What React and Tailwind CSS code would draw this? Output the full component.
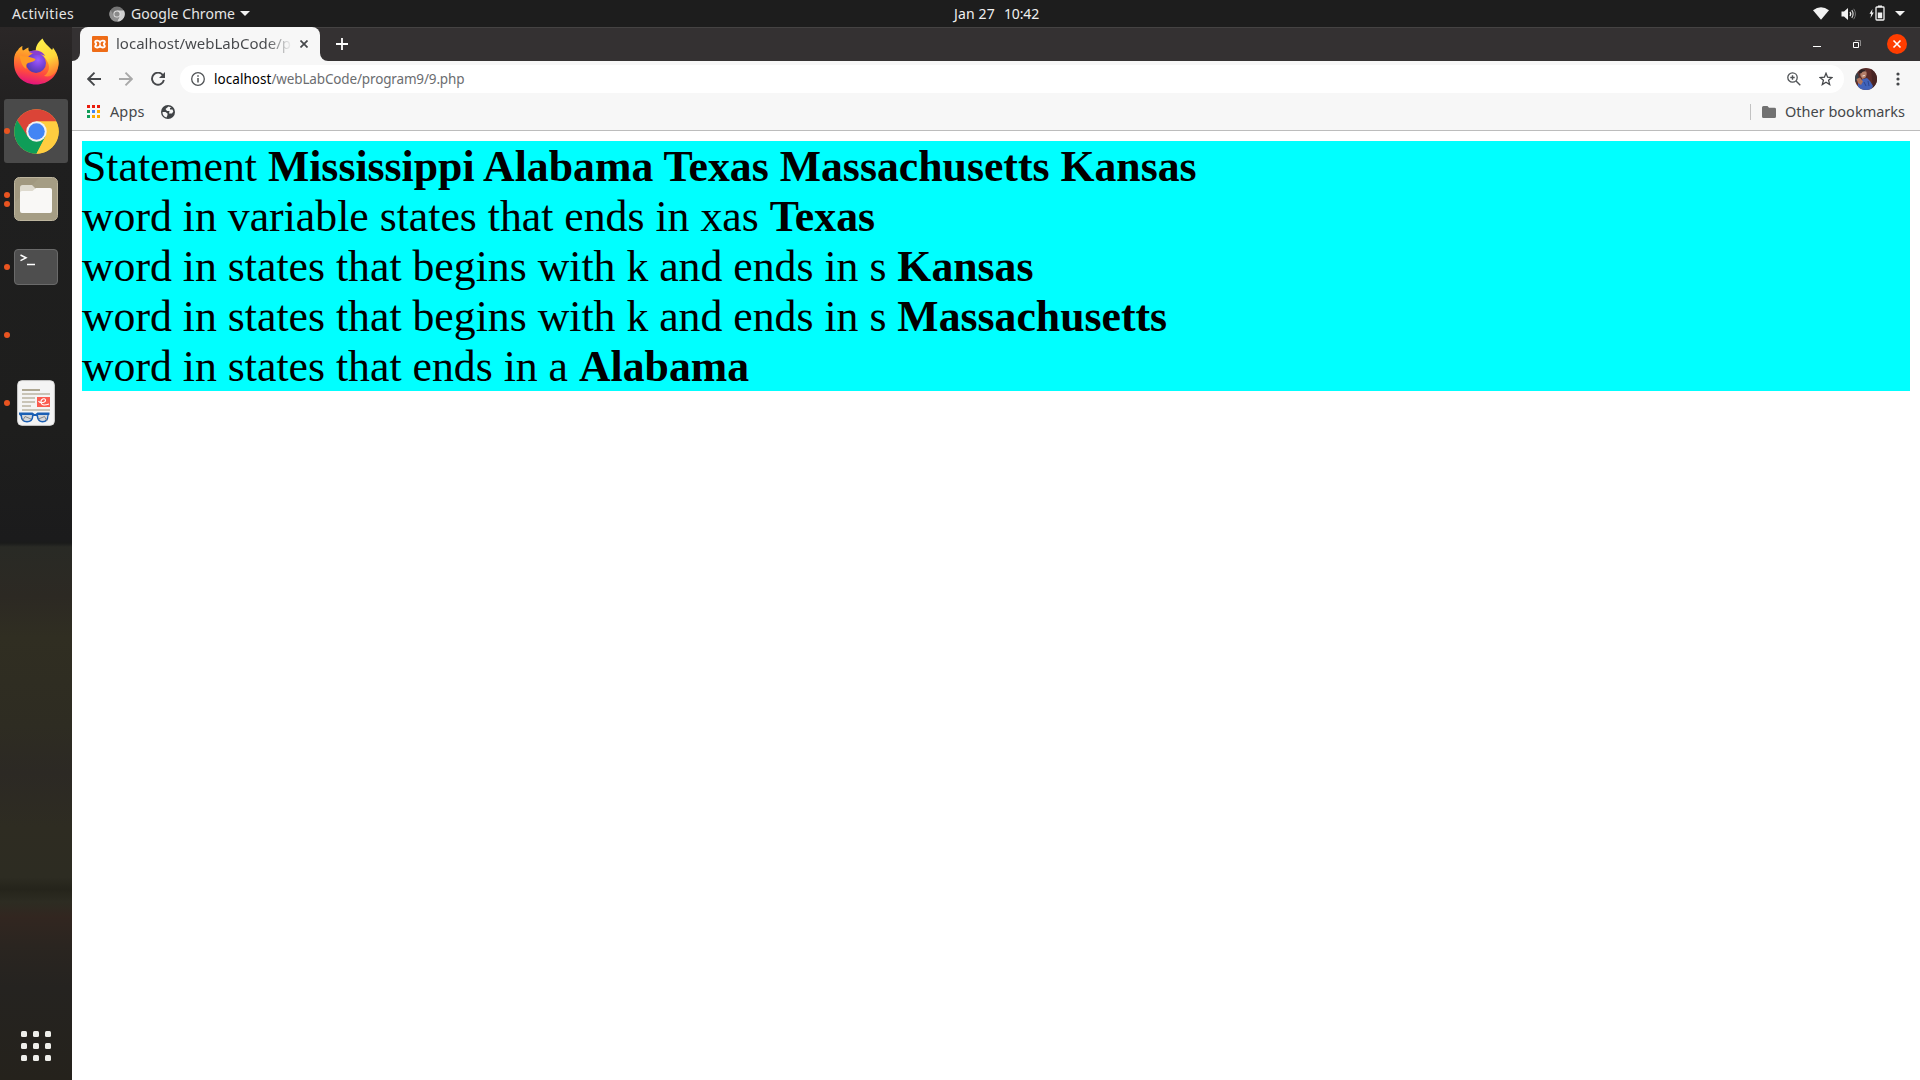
import React from 'react';

const FirefoxIcon = () => (
  <svg viewBox="0 0 46 47" className="-mt-1 h-[47px] w-[46px]">
    <defs>
      <linearGradient id="ffBody" x1="0.6" y1="0.1" x2="0.4" y2="1">
        <stop offset="0" stopColor="#ffb52e" />
        <stop offset="0.3" stopColor="#ff8a2a" />
        <stop offset="0.65" stopColor="#ff4b3e" />
        <stop offset="1" stopColor="#e2127f" />
      </linearGradient>
      <linearGradient id="ffFlame" x1="0.3" y1="0" x2="0.6" y2="1">
        <stop offset="0" stopColor="#fff04a" />
        <stop offset="0.55" stopColor="#ffd83a" />
        <stop offset="1" stopColor="#ff7a2f" />
      </linearGradient>
      <radialGradient id="ffGlobe" cx="0.6" cy="0.35" r="0.7">
        <stop offset="0" stopColor="#9d5cff" />
        <stop offset="0.5" stopColor="#7843d8" />
        <stop offset="1" stopColor="#4c3aa8" />
      </radialGradient>
    </defs>
    <path d="M1 22C1 18 2.500 14 5 12C6 10 8 8.500 9.500 8C9 10 9.200 11.500 10 12.500C12 11.500 14 10 15.500 9.500C15.300 11.500 15.500 13 16.500 13.500L29 11L41 13C44 17 45.500 21 45.500 25C45.500 37.500 35.500 46.500 23 46.500C10.500 46.500 1 37.500 1 25Z" fill="url(#ffBody)" />
    <path d="M29.500 0.500C31 4.500 35 8 38.500 11.500C39.500 12 40 11 39.800 9.500C43.500 14 46 20 45.500 26C45 34 39 40 31 38C36 35 37 29 35 25C33 20 30 16.500 23 14C22 9 25 4 29.500 0.500Z" fill="url(#ffFlame)" />
    <circle cx="23" cy="25" r="10" fill="url(#ffGlobe)" />
    <path d="M16 14C21 11.500 29 12 32 18C28 16 25 16.500 23 17Z" fill="#8a3fd0" />
    <path d="M6.500 17C10 19 15 17.500 22.500 21C22 24 17.500 24 15 25C13 26 12.500 28 13.500 31C9 29 7.500 23 6.500 17Z" fill="#ff9a25" />
  </svg>
);

const ChromeIcon = () => (
  <svg viewBox="0 0 48 48" className="size-[45px]">
    <circle cx="24" cy="24" r="23.800" fill="#ffcd40" />
    <path d="M3.400 12.100A23.800 23.800 0 0 1 44.600 12.100L44.900 13.200H24L13.600 30Z" fill="#db4437" />
    <path d="M3.400 12.100A23.800 23.800 0 0 0 24 47.800L34 29.400L14.600 29.400Z" fill="#0f9d58" />
    <path d="M24 13.200H45A23.800 23.800 0 0 1 24 47.800L33.400 29.400Z" fill="#ffcd40" />
    <circle cx="24" cy="24" r="10.900" fill="#f1f1f1" />
    <circle cx="24" cy="24" r="8.800" fill="#4285f4" />
  </svg>
);

const FilesIcon = () => (
  <svg viewBox="0 0 44 44" className="size-11">
    <rect x="0.500" y="0.500" width="43" height="43" rx="5" fill="#a1987f" stroke="#bdb59e" />
    <path d="M1 25L25 1H39Q43 1 43 5V39Q43 43 39 43H5Q1 43 1 39Z" fill="#aaa28a" opacity="0.5" />
    <path d="M6 10.500Q6 8 8.500 8H18L22 12V18H6Z" fill="#dedace" />
    <path d="M6 15.500Q6 14 8 14H18.500L22 11H36Q38 11 38 13V34Q38 36 36 36H8Q6 36 6 34Z" fill="#f9f8f6" />
  </svg>
);

const TerminalIcon = () => (
  <svg viewBox="0 0 44 36" className="h-9 w-11">
    <rect x="0.500" y="0.500" width="43" height="35" rx="3.500" fill="#4e4e4e" stroke="#6a6a6a" />
    <path d="M6.500 6L12 8.800L6.500 11.600" fill="none" stroke="#fff" strokeWidth="1.500" />
    <path d="M13 15.500H21" stroke="#fff" strokeWidth="1.500" />
  </svg>
);

const DocumentIcon = () => (
  <svg viewBox="0 0 38 46" className="h-[46px] w-[38px]">
    <rect x="0.700" y="0.700" width="36.600" height="44.600" rx="4" fill="#f4f4f4" stroke="#dcdcdc" />
    <path d="M5 10H23" stroke="#aea793" strokeWidth="2" />
    <path d="M5 14H33M5 18H18M5 22H18M5 26H14M5 30H33" stroke="#c9c4b7" strokeWidth="2" />
    <rect x="20" y="17" width="13" height="10" fill="#fa5c50" />
    <path d="M21.500 21C23 24 29 22.500 28.500 20C27.500 17.500 23.500 19 24 22.500C24.500 26 29 25 32 24" fill="none" stroke="#fff" strokeWidth="1.100" />
    <path d="M2 32.500H15.500L17.500 34H18.500L20.500 32.500H32.500V34.500L31.500 35.500Q31.500 42.500 25.500 42.500Q20.500 42.500 19.500 36H16.500Q16 42.500 10 42.500Q4 42.500 3.500 36L2 34.500Z" fill="#1a5fb4" />
    <path d="M5 35H15Q15 41 10 41Q5 41 5 35ZM21 35H30.500Q30 41 25.500 41Q21.500 41 21 35Z" fill="#d3d7dc" />
    <path d="M5.500 41L8 36.500L14 39M30 41L27.500 36.500L21.500 39" fill="none" stroke="#888" strokeWidth="1" />
  </svg>
);

const Dot = () => <span className="size-1.5 rounded-full bg-[#e95420]" />;

const DockItem = ({ dots, active, children }) => (
  <div className="flex h-16 w-[72px] shrink-0 pl-1">
    <div className={active ? 'flex w-16 items-center rounded-[3px] bg-[#4a4a4a]' : 'flex w-16 items-center'}>
      <div className="flex w-1.5 flex-col items-center gap-[3px]">
        {Array.from({ length: dots }, (_, i) => <Dot key={i} />)}
      </div>
      <div className="mr-1.5 flex flex-1 items-center justify-center">{children}</div>
    </div>
  </div>
);

const Dock = () => (
  <aside className="flex w-[72px] shrink-0 flex-col gap-1 bg-[linear-gradient(to_bottom,#2b2727_0px,#252323_50px,#1f1f1f_120px,#1e1e1d_400px,#1b1b1c_512px,#1a1b1a_516px,#292a25_520px,#2c2923_570px,#302e22_610px,#2e2c22_700px,#2c2924_745px,#2e2c22_800px,#2d2c22_850px,#25241b_862px,#2d2c22_875px,#322620_890px,#2a2520_920px,#252320_960px,#25221c_1053px)] pt-1">
    <DockItem dots={0}><FirefoxIcon /></DockItem>
    <DockItem dots={1} active><ChromeIcon /></DockItem>
    <DockItem dots={2}><FilesIcon /></DockItem>
    <DockItem dots={1}><TerminalIcon /></DockItem>
    <DockItem dots={1} />
    <DockItem dots={1}><DocumentIcon /></DockItem>
    <div className="mt-auto mb-[19px] ml-[21px] grid w-[30px] grid-cols-3 gap-1.5">
      {Array.from({ length: 9 }, (_, i) => <span key={i} className="size-1.5 rounded-[1.5px] bg-[#efefeb]" />)}
    </div>
  </aside>
);

const TopBar = () => (
  <header className="flex h-[27px] shrink-0 items-center bg-[#1d1d1d] text-sm leading-[26px] text-[#e6e6e6]">
    <div className="flex w-[954px] items-center">
      <span className="ml-3 w-[97px] tracking-[0.37px]">Activities</span>
      <svg viewBox="0 0 16 16" className="mr-[6px] size-4">
        <circle cx="8" cy="8" r="7.600" fill="#757575" />
        <path d="M8 4.500H15A7.600 7.600 0 0 1 8 15.600L11 10Z" fill="#d0d0d0" />
        <path d="M1.500 4A7.600 7.600 0 0 0 8 15.600L10 11L5 10Z" fill="#909090" />
        <circle cx="8" cy="8" r="3.600" fill="#e2e2e2" />
        <circle cx="8" cy="8" r="2.600" fill="#8a8a8a" />
      </svg>
      <span className="tracking-[0.05px]">Google Chrome</span>
      <svg viewBox="0 0 10 5" className="ml-[5px] h-[5px] w-2.5"><path d="M0 0H10L5 5Z" fill="#f2f2f2" /></svg>
    </div>
    <div className="flex gap-[9px] text-[#f0f0f0]">
      <span className="tracking-[0.15px]">Jan 27</span><span className="-tracking-[0.1px]">10:42</span>
    </div>
    <div className="flex flex-1 items-center justify-end pr-[15px]">
      <svg viewBox="0 0 16 13" className="mr-3 h-[13px] w-4"><path d="M0 3.200Q8 -2.800 16 3.200L8 12.800Z" fill="#f2f2f2" /></svg>
      <svg viewBox="0 0 16 14" className="mr-3 h-3.5 w-4">
        <path d="M0.500 4.500H3L7 1V13L3 9.500H0.500Z" fill="#f2f2f2" />
        <path d="M9 5Q10.500 7 9 9" fill="none" stroke="#f2f2f2" strokeWidth="1.300" />
        <path d="M10.800 3.200Q13.400 7 10.800 10.800" fill="none" stroke="#cfcfcf" strokeWidth="1.200" />
        <path d="M12.700 1.800Q16.200 7 12.700 12.200" fill="none" stroke="#777" strokeWidth="1" />
      </svg>
      <svg viewBox="0 0 16 16" className="mr-[10px] -mt-0.5 h-4 w-4">
        <path d="M3.500 4L0.500 8.800H2.200L1.500 13L4.800 7.500H3Z" fill="#f2f2f2" />
        <rect x="7" y="2" width="8" height="13" rx="0.800" fill="none" stroke="#f2f2f2" strokeWidth="1.300" />
        <path d="M9 0.500H13V2H9ZM8.800 7.500H13.200V13.300H8.800Z" fill="#f2f2f2" />
      </svg>
      <svg viewBox="0 0 10 5" className="h-[5px] w-2.5"><path d="M0 0H10L5 5Z" fill="#f2f2f2" /></svg>
    </div>
  </header>
);

const TabStrip = () => (
  <div className="flex h-[34px] shrink-0 border-t border-[#454343] bg-[#343132]">
    <div className="flex w-2 items-end bg-[#f7f7f7]"><div className="h-full w-2 rounded-br-lg bg-[#343132]" /></div>
    <div className="-mt-px flex w-60 items-center rounded-t-lg bg-[#f7f7f7] pl-3">
      <svg viewBox="0 0 16 16" className="mr-2 size-4 shrink-0">
        <rect width="16" height="16" rx="1" fill="#ee6c17" />
        <path d="M8 6.200C7.400 4.400 3.200 4 3.200 6C3.200 7 4.200 7.300 4.200 8C4.200 8.700 3.200 9 3.200 10.200C3.200 12.200 7.400 11.800 8 9.800C8.600 11.800 12.800 12.200 12.800 10.200C12.800 9 11.800 8.700 11.800 8C11.800 7.300 12.800 7 12.800 6C12.800 4 8.600 4.400 8 6.200Z" fill="none" stroke="#fff" strokeWidth="1.900" />
      </svg>
      <span className="mb-0.5 w-[176px] overflow-hidden bg-[linear-gradient(to_right,#45474a_0px,#45474a_150px,#45474a00_176px)] bg-clip-text text-[15px] leading-[22px] whitespace-nowrap text-transparent">localhost/webLabCode/p</span>
      <svg viewBox="0 0 8 8" className="ml-2 size-2"><path d="M0.500 0.500L7.500 7.500M7.500 0.500L0.500 7.500" stroke="#45474a" strokeWidth="1.700" /></svg>
    </div>
    <div className="flex w-2 bg-[#f7f7f7]"><div className="h-full w-2 rounded-bl-lg bg-[#343132]" /></div>
    <svg viewBox="0 0 12 12" className="mt-[10px] ml-2 size-3"><path d="M6 0V12M0 6H12" stroke="#fff" strokeWidth="1.800" /></svg>
    <div className="ml-auto flex items-center pr-[13px] pb-[1px]">
      <svg viewBox="0 0 8 8" className="mr-8 size-2"><path d="M0 6.500H8" stroke="#fff" /></svg>
      <svg viewBox="0 0 8 8" className="mr-[26px] size-2"><path d="M0.500 2.500H5.500V7.500H0.500Z" fill="none" stroke="#fff" /><path d="M2 0.500H7.500V6" fill="none" stroke="#8c8a8a" /></svg>
      <svg viewBox="0 0 20 20" className="size-5"><circle cx="10" cy="10" r="10" fill="#ff3d00" /><path d="M6.500 6.500L13.500 13.500M13.500 6.500L6.500 13.500" stroke="#fff" strokeWidth="1.600" /></svg>
    </div>
  </div>
);

const AddressBar = () => (
  <div className="flex h-9 shrink-0 items-center pl-[15px]">
    <svg viewBox="0 0 14 14" className="mr-[18px] size-3.5"><path d="M7.500 0.700L1.200 7L7.500 13.300M1.200 7H14" fill="none" stroke="#45474a" strokeWidth="1.900" /></svg>
    <svg viewBox="0 0 14 14" className="mr-[18px] size-3.5"><path d="M6.500 0.700L12.800 7L6.500 13.300M12.800 7H0" fill="none" stroke="#a9a9a9" strokeWidth="1.900" /></svg>
    <svg viewBox="0 0 14 14" className="size-3.5"><path d="M11.800 3A6 6 0 1 0 12.900 8" fill="none" stroke="#45474a" strokeWidth="1.900" /><path d="M14 0V6H8Z" fill="#45474a" /></svg>
    <div className="ml-[15px] flex h-7 w-[1664px] items-center rounded-full bg-white pr-[11px] pl-[11px]">
      <svg viewBox="0 0 14 14" className="mr-[9px] size-3.5"><circle cx="7" cy="7" r="6.300" fill="none" stroke="#505356" strokeWidth="1.300" /><path d="M7 6V10.500M7 3.300V4.800" stroke="#505356" strokeWidth="1.500" /></svg>
      <span className="text-[13.5px] leading-5 tracking-[0.05px] text-black">localhost</span>
      <span className="text-[13.5px] leading-5 -tracking-[0.15px] text-[#6b6d70]">/webLabCode/program9/9.php</span>
      <svg viewBox="0 0 14 14" className="mr-[18px] ml-auto size-3.5"><circle cx="5.500" cy="5.500" r="4.700" fill="none" stroke="#505356" strokeWidth="1.300" /><path d="M3.300 5.500H7.700M5.500 3.300V7.700M9 9L13.300 13.300" stroke="#505356" strokeWidth="1.400" /></svg>
      <svg viewBox="0 0 14 14" className="size-3.5"><path d="M7 1.300L8.600 5.200L12.900 5.500L9.600 8.300L10.700 12.500L7 10.200L3.300 12.500L4.400 8.300L1.100 5.500L5.400 5.200Z" fill="none" stroke="#45474a" strokeWidth="1.300" /></svg>
    </div>
    <svg viewBox="0 0 22 22" className="ml-[11px] size-[22px]">
      <defs><clipPath id="avatarClip"><circle cx="11" cy="11" r="11" /></clipPath></defs>
      <g clipPath="url(#avatarClip)">
        <path d="M0 0H22V22H0Z" fill="#5a2c29" />
        <path d="M16 0H22V22H18Z" fill="#482423" />
        <path d="M0 6L3 5L4 12L0 14Z" fill="#39434c" />
        <path d="M3 14L8 11L12 10L15 13L18 18L16 22H3Z" fill="#4163bb" />
        <path d="M5 3Q8 0.500 11 3Q12.500 6 10.500 9.500L7.500 11L5.500 8Z" fill="#b5806a" />
        <path d="M4 5Q4 0.500 9 1.500L11.500 3.500Q8 2.500 6 5.500Z" fill="#2b2023" />
        <path d="M7.500 8L9.800 7.500" stroke="#f4e8e2" />
        <path d="M1.500 11L5 9.500L8 13.500L6 17L3 15Z" fill="#b0745c" />
        <path d="M9 14L11 18M13 13L14 18" stroke="#2b4690" />
      </g>
    </svg>
    <svg viewBox="0 0 4 14" className="ml-[19px] h-3.5 w-1"><circle cx="2" cy="2" r="1.600" fill="#45474a" /><circle cx="2" cy="7" r="1.600" fill="#45474a" /><circle cx="2" cy="12" r="1.600" fill="#45474a" /></svg>
  </div>
);

const appColors = ['bg-[#ea1c0d]', 'bg-[#ea1c0d]', 'bg-[#ea1c0d]', 'bg-[#0f9d58]', 'bg-[#4285f4]', 'bg-[#ffab00]', 'bg-[#0f9d58]', 'bg-[#ffab00]', 'bg-[#ffab00]'];

const BookmarksBar = () => (
  <div className="flex h-[34px] shrink-0 items-center border-b border-[#bcbcbc] pr-[15px] pb-1 pl-[15px] text-[14.5px] leading-5 text-[#45474a]">
    <div className="mr-2.5 grid grid-cols-3 gap-[2px]">
      {appColors.map((color, i) => <span key={i} className={`size-[3px] ${color}`} />)}
    </div>
    <span className="mb-px tracking-[0.1px]">Apps</span>
    <svg viewBox="0 0 14 14" className="ml-[17px] size-3.5">
      <circle cx="7" cy="7" r="7" fill="#404346" />
      <path d="M7.500 1.500L4.500 4L6 6L8.500 6L8 8.500H11L12.300 6.500L11.500 4.500H9V3L10.500 2.500Z" fill="#f7f7f7" />
      <path d="M1.500 7H4.500L6.500 8.500V10L5.500 12.500A5.600 5.600 0 0 1 1.500 7Z" fill="#f7f7f7" />
    </svg>
    <span className="ml-auto h-4 w-px bg-[#c2c2c2]" />
    <svg viewBox="0 0 14 12" className="mr-[9px] ml-[11px] h-3 w-3.5"><path d="M0 1.500Q0 0 1.500 0H5.500L7 1.800H12.500Q14 1.800 14 3.200V10.500Q14 12 12.500 12H1.500Q0 12 0 10.500Z" fill="#727272" /></svg>
    <span className="mb-px">Other bookmarks</span>
  </div>
);

const Page = () => (
  <main className="flex-1 bg-white p-2.5 font-['Liberation_Serif',serif] text-[43.75px] leading-[50px] text-black">
    <div className="bg-[#00ffff]">
      <p>Statement <b>Mississippi Alabama Texas Massachusetts Kansas</b></p>
      <p>word in variable states that ends in xas <b>Texas</b></p>
      <p>word in states that begins with k and ends in s <b>Kansas</b></p>
      <p>word in states that begins with k and ends in s <b>Massachusetts</b></p>
      <p>word in states that ends in a <b>Alabama</b></p>
    </div>
  </main>
);

export default function App() {
  return (
    <div className="flex h-screen flex-col overflow-hidden bg-[#1d1d1d] font-['Noto_Sans',sans-serif]">
      <TopBar />
      <div className="flex min-h-0 flex-1">
        <Dock />
        <section className="flex min-w-0 flex-1 flex-col bg-[#f7f7f7]">
          <TabStrip />
          <AddressBar />
          <BookmarksBar />
          <Page />
        </section>
      </div>
    </div>
  );
}
